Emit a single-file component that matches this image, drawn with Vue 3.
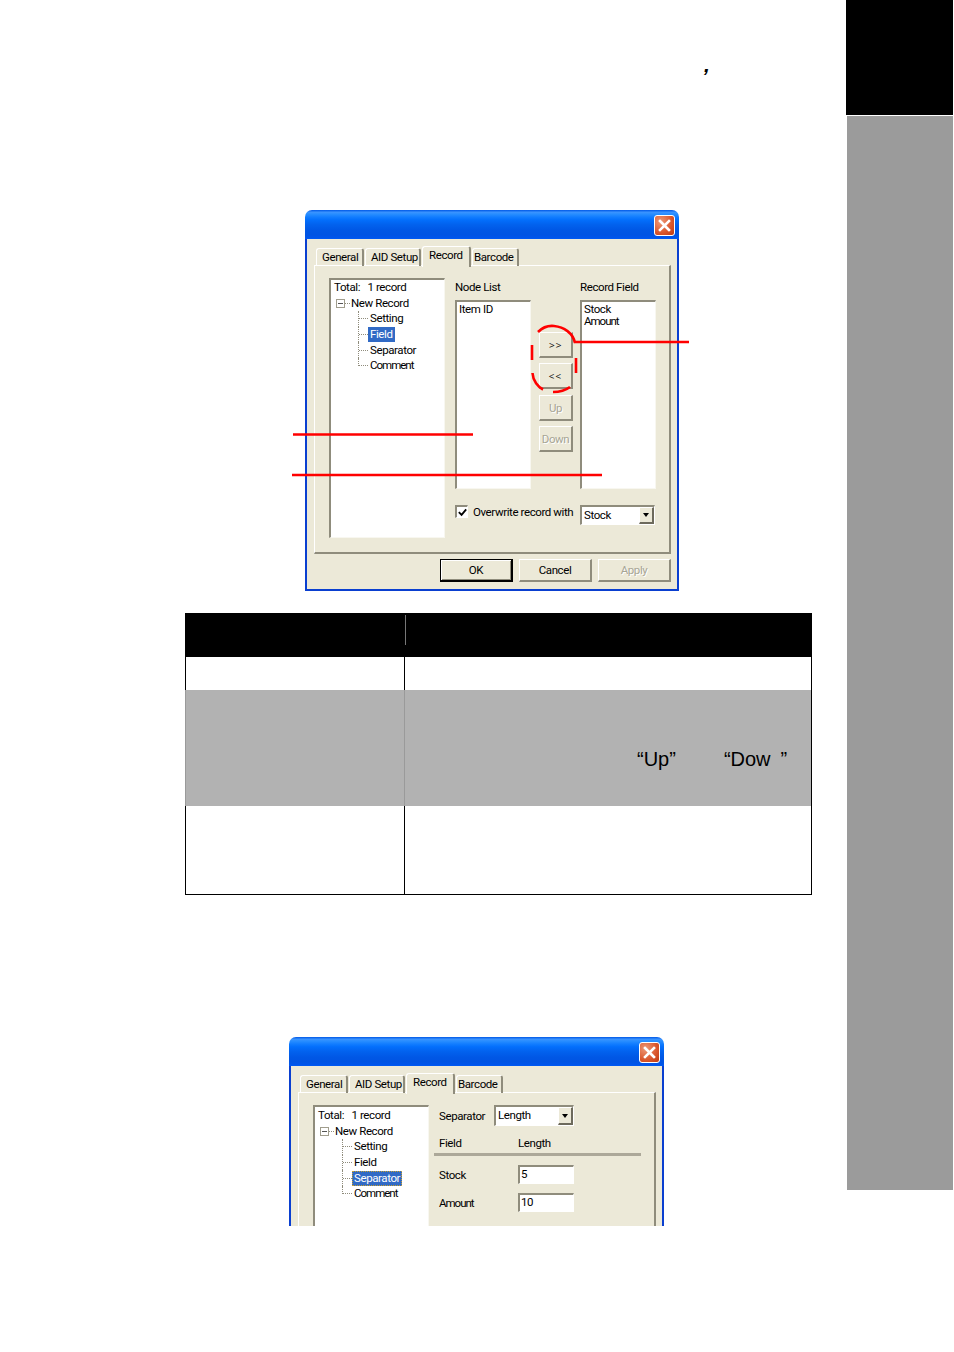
<script setup>
const tabs = ['General', 'AID Setup', 'Record', 'Barcode']
const leaves = ['Setting', 'Field', 'Separator', 'Comment']
</script>

<template>
  <div class="page">
    <main class="main">
      <div class="comma-line"><span class="comma">,</span></div>

      <section class="dialog d1">
        <header class="title"><span class="close"><svg viewBox="0 0 21 21" width="21" height="21"><path d="M6 6l9 9M15 6l-9 9" stroke="#fff" stroke-width="2.6" stroke-linecap="square" /></svg></span></header>
        <div class="client">
          <nav class="tabs">
            <span v-for="t in tabs" :key="t" class="tab" :class="{ active: t === 'Record' }">{{ t }}</span>
          </nav>
          <div class="panel">
            <div class="tree tall">
              <div class="row total">Total:&nbsp;&nbsp; 1 record</div>
              <div class="row parent"><i class="exp"></i><i class="dash"></i>New Record</div>
              <div v-for="l in leaves" :key="l" class="row leaf">
                <i class="conn"></i><span class="lbl" :class="{ sel: l === 'Field', tight: l === 'Comment' }">{{ l }}</span>
              </div>
            </div>
            <div class="fields">
              <label class="cap">Node List</label>
              <span></span>
              <label class="cap">Record Field</label>
              <div class="list"><div>Item ID</div></div>
              <div class="movers">
                <button class="btn mover arrows">&gt;&gt;</button>
                <button class="btn mover arrows">&lt;&lt;</button>
                <button class="btn mover off">Up</button>
                <button class="btn mover off">Down</button>
              </div>
              <div class="list"><div>Stock</div><div class="tight">Amount</div></div>
              <div class="check-row">
                <span class="check"><svg viewBox="0 0 12 12" width="11" height="11"><path d="M2 5.5l3 3 5-6" fill="none" stroke="#000" stroke-width="2" /></svg></span>
                <span>Overwrite record with</span>
              </div>
              <div class="combo stock"><span class="combo-val">Stock</span><span class="drop"><i></i></span></div>
            </div>
          </div>
          <footer class="actions">
            <button class="btn act default">OK</button>
            <button class="btn act">Cancel</button>
            <button class="btn act off">Apply</button>
          </footer>
        </div>
      </section>

      <table class="sheet">
        <colgroup><col class="c1" /><col /></colgroup>
        <tbody>
          <tr class="r-head"><th></th><th><div class="tick"></div></th></tr>
          <tr class="r-a"><td></td><td></td></tr>
          <tr class="r-b"><td></td><td class="quoted"><span class="q1">“Up”</span><span class="q2">“Dow</span><span class="q3">”</span></td></tr>
          <tr class="r-c"><td></td><td></td></tr>
        </tbody>
      </table>

      <section class="dialog d2">
        <header class="title"><span class="close"><svg viewBox="0 0 21 21" width="21" height="21"><path d="M6 6l9 9M15 6l-9 9" stroke="#fff" stroke-width="2.6" stroke-linecap="square" /></svg></span></header>
        <div class="client">
          <nav class="tabs">
            <span v-for="t in tabs" :key="t" class="tab" :class="{ active: t === 'Record' }">{{ t }}</span>
          </nav>
          <div class="panel">
            <div class="tree tall">
              <div class="row total">Total:&nbsp;&nbsp; 1 record</div>
              <div class="row parent"><i class="exp"></i><i class="dash"></i>New Record</div>
              <div v-for="l in leaves" :key="l" class="row leaf">
                <i class="conn"></i><span class="lbl" :class="{ sel: l === 'Separator', focus: l === 'Separator', tight: l === 'Comment' }">{{ l }}</span>
              </div>
            </div>
            <div class="sep-form">
              <div class="sep-top">
                <span class="sep-name">Separator</span>
                <div class="combo length"><span class="combo-val">Length</span><span class="drop"><i></i></span></div>
              </div>
              <div class="sep-head"><span class="col-a">Field</span><span>Length</span></div>
              <div class="rule"></div>
              <div class="sep-row"><span class="col-a">Stock</span><span class="input">5</span></div>
              <div class="sep-row"><span class="col-a tight">Amount</span><span class="input">10</span></div>
            </div>
          </div>
        </div>
      </section>
    </main>

    <aside class="side">
      <div class="side-black"></div>
      <div class="side-grey"></div>
    </aside>

    <svg class="marks" width="954" height="1352" viewBox="0 0 954 1352">
      <g fill="none" stroke="#f00" stroke-width="2.3">
        <path d="M293 434.500H473M292 475H602M574 342H689" />
        <g stroke-width="2.6">
          <path d="M538 332C543 327 549 325.500 554 326C564 327 573 333 575 343" />
          <path d="M532 345V360" />
          <path d="M576 358V373" />
          <path d="M532.500 373C533 381 538 387 543 389.500" />
          <path d="M553 392C560 392 566 390 570 387" />
        </g>
      </g>
    </svg>
  </div>
</template>

<style>
html, body { margin: 0; background: #fff; }
</style>

<style scoped>
.page {
  position: relative;
  width: 954px;
  height: 1352px;
  display: grid;
  grid-template-columns: 846px 107px;
  overflow: hidden;
  background: #fff;
  font-family: Roboto, "Liberation Sans", sans-serif;
  font-size: 11.5px;
  letter-spacing: -0.4px;
  color: #000;
}
.tight { letter-spacing: -1px; }
.main { min-width: 0; }
.comma-line { height: 210px; box-sizing: border-box; padding: 53px 0 0 704px; }
.comma { font: italic 700 21px/24px "Liberation Sans", sans-serif; letter-spacing: 0; }

.side { display: flex; flex-direction: column; }
.side-black { height: 115px; background: #000; }
.side-grey { height: 1074px; margin: 1px 0 0 1px; background: #9b9b9b; }

.marks { position: absolute; left: 0; top: 0; pointer-events: none; }

/* dialog frame */
.dialog { box-sizing: border-box; display: flex; flex-direction: column; border-radius: 7px 7px 0 0; overflow: hidden; }
.d1 { width: 374px; height: 381px; margin-left: 305px; }
.d2 { width: 375px; height: 189px; margin: 142px 0 0 289px; }
.title {
  flex: none;
  height: 29px;
  display: flex;
  justify-content: flex-end;
  align-items: center;
  padding-right: 4px;
  background: linear-gradient(180deg, #0058e6 0, #3a93ff 8%, #288eff 14%, #127dff 24%, #036ffc 34%, #0262ee 50%, #0057e5 70%, #0054e3 85%, #0055eb 95%, #005bf5 100%);
}
.close {
  width: 19px;
  height: 19px;
  margin-top: 1px;
  border: 1px solid #fff;
  border-radius: 3px;
  background: radial-gradient(circle at 30% 30%, #ee9a78, #d9562c 60%, #bd3a12);
  display: flex;
  align-items: center;
  justify-content: center;
}
.close svg { display: block; flex: none; }
.client {
  flex: 1;
  min-height: 0;
  box-sizing: border-box;
  background: #ece9d8;
  border: solid #0a3fd0;
  border-width: 0 2px 2px;
  padding: 7px 6px 0 7px;
}
.d2 .client { border-bottom: 0; }

/* tabs */
.tabs {
  display: grid;
  grid-template-columns: 48px 56px 49px 47px;
  gap: 1px;
  align-items: end;
  height: 19px;
  padding-left: 2px;
  position: relative;
  z-index: 1;
}
.tab {
  box-sizing: border-box;
  height: 18px;
  line-height: 17px;
  padding-left: 5px;
  border: solid;
  border-width: 1px 2px 0 1px;
  border-color: #fff #8f8c7c #fff #fff;
  border-radius: 3px 3px 0 0;
  white-space: nowrap;
}
.tab:nth-child(4) { padding-left: 1px; }
.tab.active {
  height: 21px;
  line-height: 17px;
  margin-bottom: -1px;
  padding-left: 6px;
  background: #ece9d8;
}

/* panel */
.panel {
  box-sizing: border-box;
  display: flex;
  align-items: flex-start;
  padding: 12px 0 0 14px;
  border: solid;
  border-width: 1px 2px 2px 1px;
  border-color: #fff #8f8c7c #8f8c7c #fff;
}
.d1 .panel { height: 289px; }
.d2 .panel { height: 200px; border-bottom: 0; }

.tree {
  box-sizing: border-box;
  flex: none;
  width: 116px;
  height: 260px;
  background: #fff;
  border: solid;
  border-width: 2px 1px 1px 2px;
  border-color: #8f8c7c #f8f7f0 #f8f7f0 #8f8c7c;
}
.d2 .tree { padding-top: 1px; }
.row { height: 15.6px; line-height: 15.6px; display: flex; align-items: center; white-space: nowrap; }
.total { padding-left: 3px; }
.parent { padding-left: 5px; }
.exp {
  box-sizing: border-box;
  width: 9px;
  height: 9px;
  border: 1px solid #a09d8d;
  background: linear-gradient(#555, #555) center / 5px 1px no-repeat #fff;
}
.dash { width: 5px; margin-right: 1px; border-top: 1px dotted #8f8c7c; }
.leaf { padding-left: 27px; }
.conn {
  box-sizing: border-box;
  width: 11px;
  height: 100%;
  border-left: 1px dotted #8f8c7c;
  background: linear-gradient(90deg, #8f8c7c 50%, transparent 50%) 0 50% / 2px 1px repeat-x;
}
.leaf:last-child .conn { height: 50%; margin-bottom: 7.800px; background-position: 0 100%; }
.lbl { padding: 0 2px; margin-left: -1px; line-height: 15px; }
.lbl.sel { background: #316ac5; color: #fff; }
.lbl.focus { outline: 1px dotted #c8a030; outline-offset: -1px; }

/* field selector */
.fields {
  margin-left: 10px;
  display: grid;
  grid-template-columns: 76px 49px 76px;
  grid-template-rows: 22px 189px auto;
}
.cap { line-height: 19px; }
.list {
  box-sizing: border-box;
  background: #fff;
  padding: 1px 0 0 2px;
  line-height: 12px;
  border: solid;
  border-width: 2px 1px 1px 2px;
  border-color: #8f8c7c #f8f7f0 #f8f7f0 #8f8c7c;
}
.movers { display: flex; flex-direction: column; gap: 5.300px; padding: 32px 0 0 8px; }
.btn {
  box-sizing: border-box;
  margin: 0;
  padding: 0;
  font: inherit;
  letter-spacing: inherit;
  color: #000;
  background: #ece9d8;
  border: solid;
  border-width: 1px 2px 2px 1px;
  border-color: #fff #8f8c7c #8f8c7c #fff;
}
.mover { width: 34px; height: 26px; padding-top: 1px; }
.arrows { font-weight: 300; letter-spacing: 0.8px; padding-top: 0; }
.off { color: #a7a595; text-shadow: 1px 1px 0 #fff; }
.check-row { grid-column: 1 / 3; margin-top: 15px; display: flex; align-items: center; height: 15px; gap: 5px; white-space: nowrap; }
.check {
  box-sizing: border-box;
  flex: none;
  width: 13px;
  height: 13px;
  background: #fff;
  border: solid;
  border-width: 2px 1px 1px 2px;
  border-color: #8f8c7c #fff #fff #8f8c7c;
  display: flex;
  align-items: center;
  justify-content: center;
}
.check svg { flex: none; }
.combo {
  box-sizing: border-box;
  background: #fff;
  display: flex;
  align-items: stretch;
  border: solid;
  border-width: 2px 1px 1px 2px;
  border-color: #8f8c7c #fff #fff #8f8c7c;
}
.stock { width: 75px; height: 20px; margin-top: 16px; }
.combo-val { flex: 1; padding-left: 2px; line-height: 17px; }
.drop {
  box-sizing: border-box;
  width: 15px;
  background: #ece9d8;
  border: solid;
  border-width: 1px 2px 2px 1px;
  border-color: #fff #6d6a5c #6d6a5c #fff;
  display: flex;
  align-items: center;
  justify-content: center;
}
.drop i { width: 0; height: 0; border: solid transparent; border-width: 4px 3.500px 0; border-top-color: #000; }

/* buttons row */
.actions { display: flex; justify-content: flex-end; gap: 6px; padding-top: 5px; }
.act { width: 73px; height: 23px; }
.default { border: 1px solid #000; border-width: 1px 2px 2px 1px; box-shadow: inset 1px 1px 0 #fff, inset -1px -1px 0 #8f8c7c; }

/* separator form */
.sep-form { flex: 1; min-width: 0; padding-left: 5px; }
.sep-top { display: flex; align-items: center; height: 21px; padding-left: 5px; }
.sep-name { width: 55px; flex: none; }
.length { width: 80px; height: 21px; }
.sep-head { display: flex; height: 17px; margin-top: 8px; padding-left: 5px; align-items: center; }
.col-a { width: 79px; flex: none; }
.rule { width: 207px; height: 3px; margin-top: 2px; background: #aca899; }
.sep-row { display: flex; align-items: center; height: 20px; padding-left: 5px; }
.rule + .sep-row { margin-top: 9px; }
.sep-row + .sep-row { margin-top: 8px; }
.input {
  box-sizing: border-box;
  width: 56px;
  height: 19px;
  margin-bottom: 1px;
  padding-left: 1px;
  line-height: 15px;
  background: #fff;
  border: solid;
  border-width: 2px 1px 1px 2px;
  border-color: #8f8c7c #fff #fff #8f8c7c;
}

/* table */
.sheet {
  width: 627px;
  height: 282px;
  margin: 22px 0 0 185px;
  table-layout: fixed;
  border-collapse: collapse;
  border: 1px solid #000;
  letter-spacing: 0;
}
.c1 { width: 219px; }
.sheet th, .sheet td { padding: 0; border-left: 1px solid #000; }
.sheet th { background: #000; vertical-align: top; }
.r-head { height: 43px; }
.r-a { height: 33px; }
.r-b { height: 116px; }
.r-b td { background: #b2b2b2; border-left-color: #9a9a9a; }
.tick { width: 1px; height: 30px; margin-top: 1px; background: #777; }
.sheet td.quoted {
  vertical-align: top;
  padding: 56px 0 0 232px;
  font: 20px/26px "Liberation Sans", sans-serif;
  white-space: nowrap;
}
.q2 { margin-left: 48px; }
.q3 { margin-left: 10px; }
</style>
